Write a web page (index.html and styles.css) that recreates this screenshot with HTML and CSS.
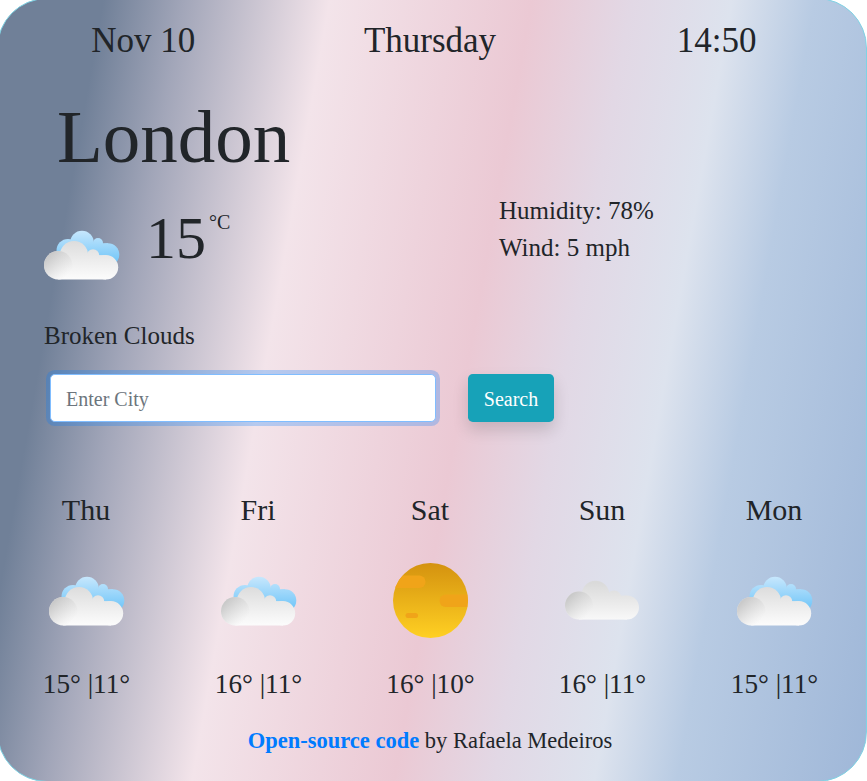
FILE: index.html
```html
<!DOCTYPE html>
<html lang="en">
<head>
<meta charset="utf-8">
<title>Weather</title>
<link rel="stylesheet" href="styles.css">
</head>
<body>
<svg class="defs" aria-hidden="true">
  <defs>
    <linearGradient id="white" gradientUnits="userSpaceOnUse" x1="0" y1="20" x2="0" y2="60"><stop offset="0" stop-color="#dadada"/><stop offset="1" stop-color="#fbfbfb"/></linearGradient>
    <linearGradient id="blue" gradientUnits="userSpaceOnUse" x1="0" y1="12" x2="0" y2="46"><stop offset="0" stop-color="#c9e8fd"/><stop offset="1" stop-color="#6dc4f8"/></linearGradient>
    <linearGradient id="shade" x1="0.1" y1="0.1" x2="0.85" y2="0.8"><stop offset="0" stop-color="#c4c4c4"/><stop offset="1" stop-color="#dcdcdc" stop-opacity="0"/></linearGradient>
    <linearGradient id="gold" x1="0" y1="0" x2="0" y2="1"><stop offset="0" stop-color="#d4920f"/><stop offset="1" stop-color="#ffd023"/></linearGradient>
    <clipPath id="disc"><circle cx="37.500" cy="37.500" r="37.500"/></clipPath>
    <symbol id="broken" viewBox="0 0 76 76">
      <g fill="url(#blue)"><circle cx="38" cy="24.500" r="11.800"/><circle cx="24" cy="32.500" r="11.500"/><circle cx="54" cy="25" r="5"/><circle cx="64" cy="36.500" r="11.300"/><rect x="24" y="25.200" width="40" height="19"/></g>
      <g fill="url(#white)"><circle cx="14.200" cy="47.300" r="14.200"/><circle cx="30" cy="37" r="14"/><circle cx="49" cy="37.500" r="6.200"/><circle cx="62" cy="49.300" r="12.200"/><rect x="14.200" y="37.100" width="47.800" height="24.400"/></g>
      <circle cx="14.200" cy="47.300" r="14.200" fill="url(#shade)"/>
    </symbol>
    <symbol id="scattered" viewBox="0 1 76 76">
      <g fill="url(#white)"><circle cx="14" cy="42.600" r="14"/><circle cx="30.500" cy="31.500" r="13.700"/><circle cx="49" cy="35" r="7.500"/><circle cx="62" cy="44.600" r="12"/><rect x="14" y="32.600" width="48" height="24"/></g>
      <circle cx="14" cy="42.600" r="14" fill="url(#shade)"/>
    </symbol>
    <symbol id="sun" viewBox="0 0 76 76" overflow="visible">
      <g transform="translate(0 -1)">
        <circle cx="37.500" cy="37.500" r="37.500" fill="url(#gold)"/>
        <g clip-path="url(#disc)" fill="#f0a419"><rect x="-4" y="12.500" width="36.500" height="12.500" rx="6.250"/><rect x="46.500" y="31.500" width="40" height="12.500" rx="6.250"/><rect x="12.500" y="50" width="12.500" height="5" rx="2.500"/></g>
      </g>
    </symbol>
  </defs>
</svg>
<main class="card">
  <header class="top"><span>Nov 10</span><span>Thursday</span><span>14:50</span></header>
  <h1 class="city">London</h1>
  <section class="current">
    <div class="now">
      <svg class="icon"><use href="#broken"/></svg>
      <span class="temp">15</span><span class="unit">°C</span>
    </div>
    <div class="details"><div>Humidity: 78%</div><div>Wind: 5 mph</div></div>
  </section>
  <div class="description">Broken Clouds</div>
  <form class="search">
    <input class="field" type="text" placeholder="Enter City">
    <button class="button" type="button">Search</button>
  </form>
  <section class="forecast">
    <div class="day"><div class="name">Thu</div><svg class="icon"><use href="#broken"/></svg><div class="range">15° |11°</div></div>
    <div class="day"><div class="name">Fri</div><svg class="icon"><use href="#broken"/></svg><div class="range">16° |11°</div></div>
    <div class="day"><div class="name">Sat</div><svg class="icon"><use href="#sun"/></svg><div class="range">16° |10°</div></div>
    <div class="day"><div class="name">Sun</div><svg class="icon"><use href="#scattered"/></svg><div class="range">16° |11°</div></div>
    <div class="day"><div class="name">Mon</div><svg class="icon"><use href="#broken"/></svg><div class="range">15° |11°</div></div>
  </section>
  <footer class="footer"><a class="link">Open-source code</a> by Rafaela Medeiros</footer>
</main>
</body>
</html>
```
FILE: styles.css
```css
* { box-sizing: border-box; }
html { overflow: hidden; background: #fff; }
body {
  margin: -2px 0 0 -3px;
  font-family: "Liberation Serif", "Times New Roman", serif;
  color: #212529;
}
.defs { position: absolute; width: 0; height: 0; }
.card {
  width: 870px;
  height: 784px;
  padding: 2px 6px 0 2px;
  border: 1px solid #7fd3e4;
  border-radius: 50px;
  background: linear-gradient(100deg, #708098 10.500%, #a2a6b9 18.500%, #f3e4ea 33%, #ebc9d4 53.100%, #e2d8e5 63%, #dde3ee 73%, #b8cbe3 81.200%, #9fb7d8 100%);
}
.top { display: grid; grid-template-columns: repeat(3, 1fr); height: 80px; text-align: center; font-size: 35px; line-height: 80px; }
.city { margin: 13px 0 0 57px; font-size: 75px; font-weight: 400; line-height: 86px; }
.current { display: flex; height: 120px; margin-top: 12px; }
.now { display: flex; width: 455px; margin-left: 44px; }
.icon { display: block; width: 76px; height: 76px; overflow: visible; }
.now .icon { margin-top: 26px; }
.temp { margin-left: 26px; font-size: 60px; line-height: 92px; }
.unit { margin-left: 3px; font-size: 20px; line-height: 61px; }
.details { font-size: 25px; line-height: 37px; }
.description { margin: 5px 0 0 44px; font-size: 25px; line-height: 38px; }
.search { display: flex; gap: 32px; margin: 19px 0 0 50px; }
.field {
  width: 386px;
  height: 48px;
  padding: 9px 15px 7px;
  border: 1px solid #80bdff;
  border-radius: 4.8px;
  outline: 0;
  background: #fff;
  box-shadow: 0 0 0 4px rgba(0, 123, 255, .25);
  font: 20px "Liberation Serif", serif;
}
.field::placeholder { color: #6c757d; }
.button {
  width: 86px;
  height: 48px;
  padding: 2px 0 0;
  border: 0;
  border-radius: 4.8px;
  background: #17a2b8;
  box-shadow: 0 8px 16px rgba(0, 0, 0, .15);
  color: #fff;
  font: 20px "Liberation Serif", serif;
}
.forecast { display: grid; grid-template-columns: repeat(5, 1fr); margin-top: 65px; text-align: center; }
.day { display: flex; flex-direction: column; align-items: center; }
.name { font-size: 30px; line-height: 45px; }
.day .icon { margin: 32px 0 0 2px; }
.range { margin: 23px 0 0 1px; font-size: 27.2px; line-height: 42px; }
.footer { margin-top: 19px; text-align: center; font-size: 22.5px; line-height: 34px; }
.link { color: #007bff; font-weight: 700; }
```
